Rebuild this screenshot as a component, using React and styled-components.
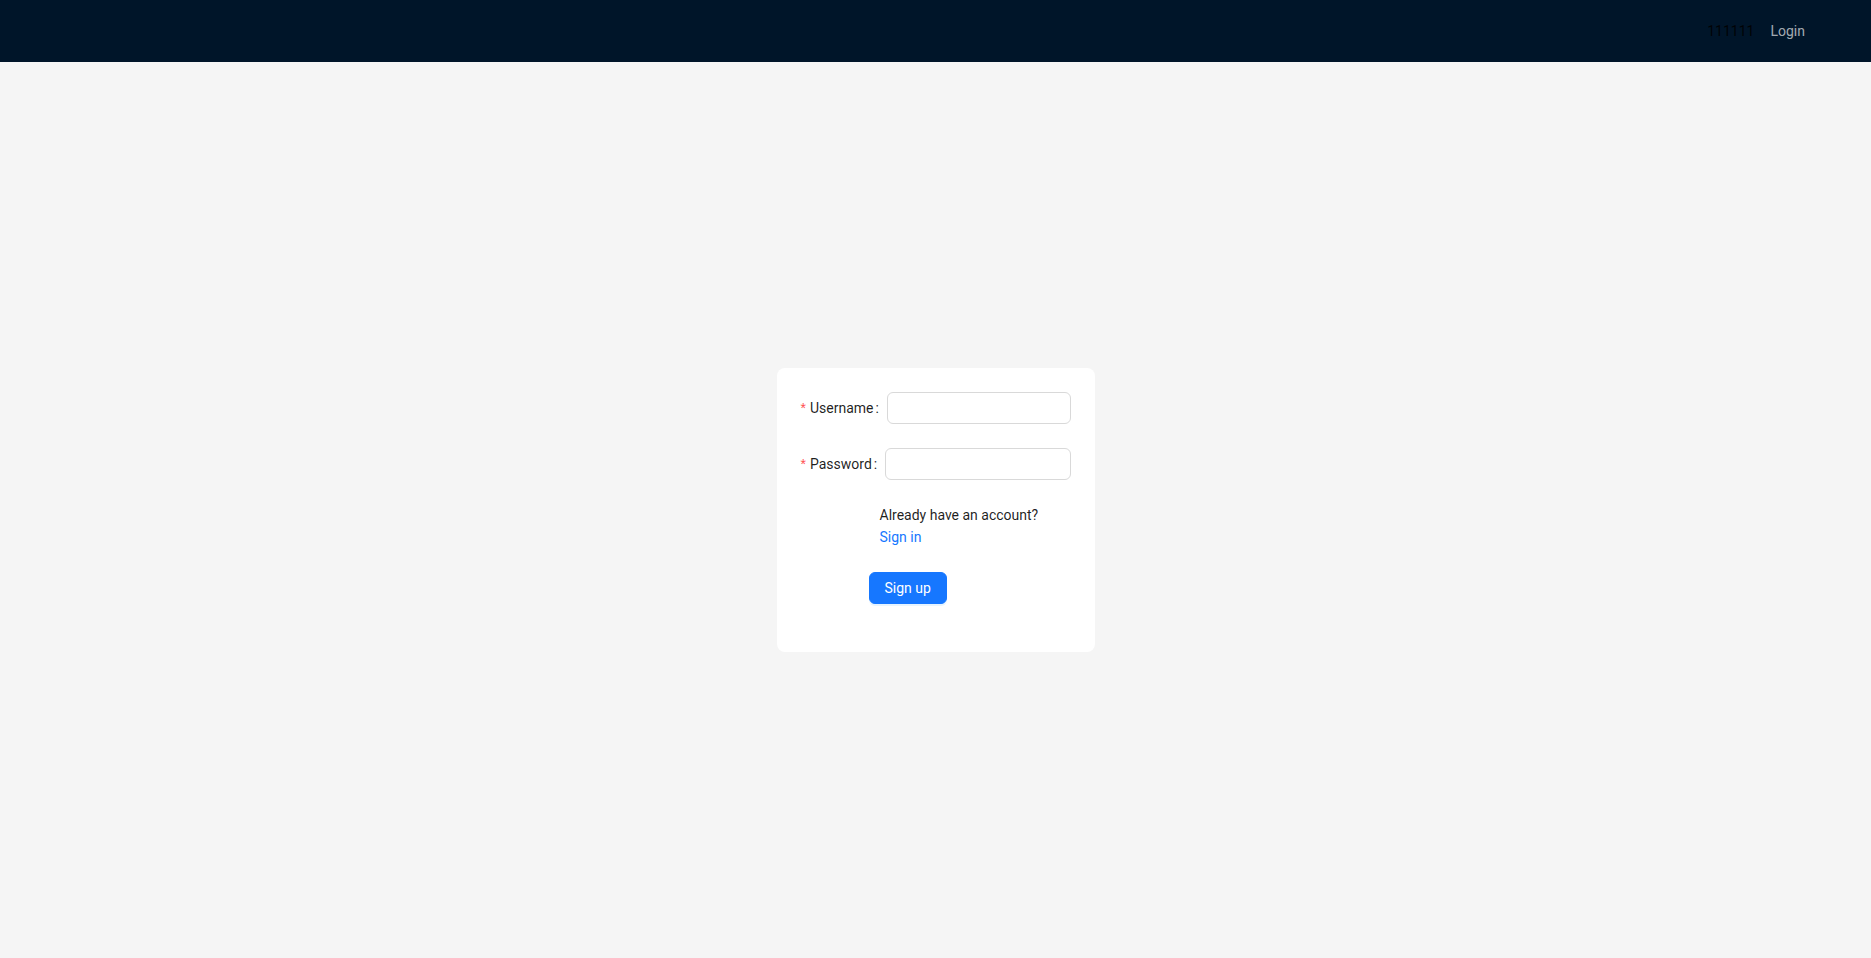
import React from "react";
import styled, { createGlobalStyle } from "styled-components";

const Global = createGlobalStyle`
  html, body { margin: 0; padding: 0; }
  body {
    font-family: Roboto, "Liberation Sans", sans-serif;
    font-size: 14px;
    background: #f5f5f5;
    color: rgba(0, 0, 0, 0.88);
  }
  * { box-sizing: border-box; }
`;

const Page = styled.div`
  min-height: 958px;
  display: flex;
  flex-direction: column;
  background: #f5f5f5;
`;

const Header = styled.header`
  height: 62px;
  flex: none;
  background: #001529;
  padding: 0 50px;
  display: flex;
  align-items: center;
  justify-content: flex-end;
`;

const UserName = styled.span`
  color: rgba(0, 0, 0, 0.88);
  font-size: 14px;
  line-height: 62px;
`;

const MenuItem = styled.a`
  color: rgba(255, 255, 255, 0.65);
  padding: 0 16px;
  line-height: 62px;
  text-decoration: none;
  cursor: pointer;
`;

const Main = styled.main`
  flex: 1;
  display: flex;
  align-items: center;
  justify-content: center;
`;

const Card = styled.div`
  width: 318px;
  background: #fff;
  border-radius: 8px;
  padding: 24px;
`;

const Row = styled.div`
  display: flex;
  align-items: center;
  height: 32px;
  margin-bottom: 24px;
`;

const Label = styled.label`
  display: flex;
  align-items: center;
  white-space: nowrap;
  color: rgba(0, 0, 0, 0.88);
  line-height: 22px;
`;

const Required = styled.span`
  color: #ff4d4f;
  margin-right: 4px;
  font-family: "Liberation Sans", sans-serif;
`;

const Colon = styled.span`
  margin: 0 8px 0 2px;
`;

const Input = styled.input`
  flex: 1;
  min-width: 0;
  height: 32px;
  border: 1px solid #d9d9d9;
  border-radius: 6px;
  padding: 4px 11px;
  font: inherit;
  outline: none;
  background: #fff;
`;

const Note = styled.div`
  padding-left: ${(p) => p.$indent}px;
  line-height: 22px;
  margin-bottom: 24px;
`;

const Link = styled.a`
  display: block;
  color: #1677ff;
  text-decoration: none;
  cursor: pointer;
`;

const Actions = styled.div`
  padding-left: ${(p) => p.$indent}px;
  margin-bottom: 24px;
  height: 32px;
`;

const Button = styled.button`
  height: 32px;
  padding: 4px 15px;
  border: 1px solid #1677ff;
  border-radius: 6px;
  background: #1677ff;
  color: #fff;
  font: inherit;
  line-height: 22px;
  cursor: pointer;
  box-shadow: 0 2px 0 rgba(5, 145, 255, 0.1);
`;

export default function App() {
  return (
    <>
      <Global />
      <Page>
        <Header>
          <UserName>111111</UserName>
          <MenuItem>Login</MenuItem>
        </Header>
        <Main>
          <Card>
            <Row>
              <Label>
                <Required>*</Required>Username<Colon>:</Colon>
              </Label>
              <Input />
            </Row>
            <Row>
              <Label>
                <Required>*</Required>Password<Colon>:</Colon>
              </Label>
              <Input type="password" />
            </Row>
            <Note $indent={79}>
              Already have an account?
              <Link>Sign in</Link>
            </Note>
            <Actions $indent={68}>
              <Button>Sign up</Button>
            </Actions>
          </Card>
        </Main>
      </Page>
    </>
  );
}
